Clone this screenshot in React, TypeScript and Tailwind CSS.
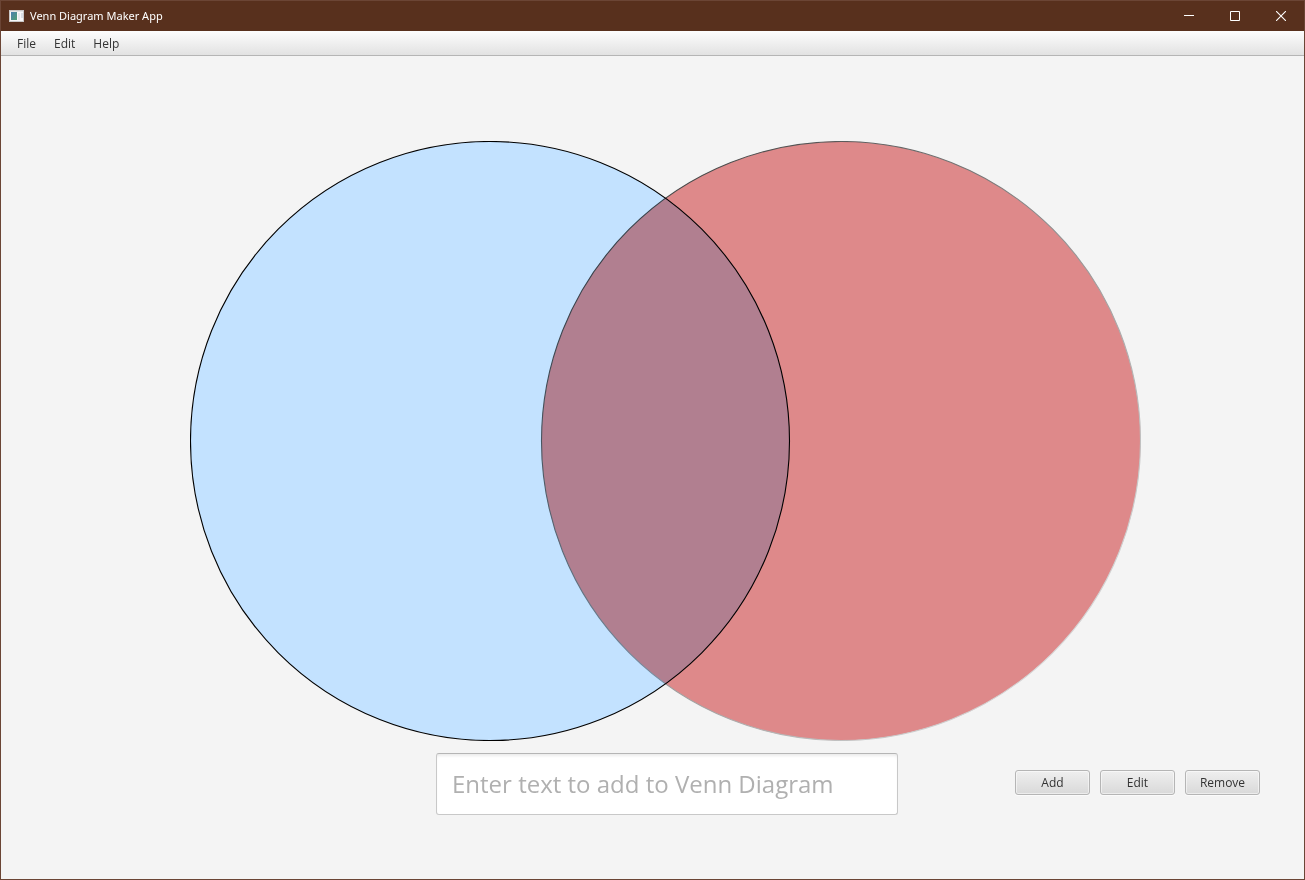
import { useState } from "react";

const menus = ["File", "Edit", "Help"];
const actions = ["Add", "Edit", "Remove"];

function AppIcon() {
  return (
    <svg width="15" height="12" viewBox="0 0 15 12" shapeRendering="crispEdges" aria-hidden="true">
      <defs>
        <linearGradient id="pane" x1="0" y1="0" x2="1" y2="1">
          <stop offset="0" stopColor="#4a7fb0" />
          <stop offset="1" stopColor="#4f9f72" />
        </linearGradient>
      </defs>
      <rect width="15" height="12" fill="#c9c7c6" />
      <rect x="1" y="1" width="13" height="10" fill="#f8f8f8" />
      <rect x="1" y="1" width="13" height="1" fill="#e4e4e4" />
      <rect x="2" y="2" width="6" height="8" fill="url(#pane)" />
      <rect x="9" y="3" width="2" height="7" fill="#e6e9ed" />
      <rect x="12" y="3" width="2" height="5" fill="#dcdfe4" />
    </svg>
  );
}

function WindowButton({ label, children }: { label: string; children: React.ReactNode }) {
  return (
    <button type="button" aria-label={label} className="flex h-full w-[46px] items-center justify-center hover:bg-white/10">
      <svg width="10" height="10" viewBox="0 0 10 10" fill="none" stroke="#fff" aria-hidden="true">
        {children}
      </svg>
    </button>
  );
}

function TitleBar() {
  return (
    <header className="flex h-[30px] items-center justify-between bg-[#58301d] text-white">
      <div className="flex items-center gap-1.5 pl-2">
        <AppIcon />
        <h1 className="font-['Noto_Sans',sans-serif] text-[11px]">Venn Diagram Maker App</h1>
      </div>
      <div className="flex h-full">
        <WindowButton label="Minimize">
          <path d="M0 4.5h10" />
        </WindowButton>
        <WindowButton label="Maximize">
          <path d="M.5.5h9v9h-9z" />
        </WindowButton>
        <WindowButton label="Close">
          <path d="M0 0l10 10M10 0L0 10" strokeWidth="1.1" />
        </WindowButton>
      </div>
    </header>
  );
}

function MenuBar() {
  return (
    <nav className="flex h-[25px] items-center border-b border-[#b5b5b5] bg-linear-to-b from-[#fdfdfd] to-[#e2e2e2] pt-px pl-[7px] text-xs text-[#333]">
      {menus.map((menu) => (
        <button key={menu} type="button" className="px-[9px]">
          {menu}
        </button>
      ))}
    </nav>
  );
}

function VennDiagram() {
  return (
    <svg viewBox="0 0 951 600" className="block h-auto w-full max-w-[951px]" role="img" aria-label="Venn diagram">
      <defs>
        <linearGradient id="outline" x1="0" y1="0" x2="1" y2="1">
          <stop offset="0" stopColor="#2a2a2a" />
          <stop offset="1" stopColor="#fff" />
        </linearGradient>
      </defs>
      <rect width="951" height="600" fill="#f4f4f4" />
      <circle cx="300" cy="300" r="299.5" fill="#c3e2ff" stroke="#000" strokeWidth="1.1" />
      <circle cx="651" cy="300" r="299.5" fill="#e88f90" stroke="url(#outline)" strokeWidth="1.1" className="mix-blend-multiply" />
    </svg>
  );
}

export default function App() {
  const [text, setText] = useState("");

  return (
    <div className="flex min-h-screen flex-col border border-[#6b4535] bg-[#f4f4f4] font-['Open_Sans','Noto_Sans',sans-serif]">
      <TitleBar />
      <MenuBar />
      <main className="flex flex-1 flex-col pt-[85px]">
        <div className="flex justify-center pl-[26px]">
          <VennDiagram />
        </div>
        <form
          className="mt-3 grid grid-cols-[1fr_462px_1fr] items-center pr-[44px] pl-[73px]"
          onSubmit={(event) => event.preventDefault()}
        >
          <input
            type="text"
            aria-label="Text to add"
            placeholder="Enter text to add to Venn Diagram"
            value={text}
            onChange={(event) => setText(event.target.value)}
            className="col-start-2 h-[62px] w-full rounded-[3px] border border-[#c8c8c8] border-t-[#b5b5b5] bg-white px-[15px] pb-0.5 text-2xl text-[#333] shadow-[inset_0_3px_3px_-1px_#ececec] outline-none placeholder:text-[#b0b0b0]"
          />
          <div className="flex justify-end gap-2.5 pt-px">
            {actions.map((action) => (
              <button
                key={action}
                type="button"
                className="mb-1 h-[25px] w-[75px] rounded-[3px] border border-[#b5b5b5] bg-linear-to-b from-[#efefef] to-[#d9d9d9] text-xs text-[#333] shadow-[inset_0_0_0_1px_#ffffff80,0_1px_0_#fbfbfb]"
              >
                {action}
              </button>
            ))}
          </div>
        </form>
      </main>
    </div>
  );
}
